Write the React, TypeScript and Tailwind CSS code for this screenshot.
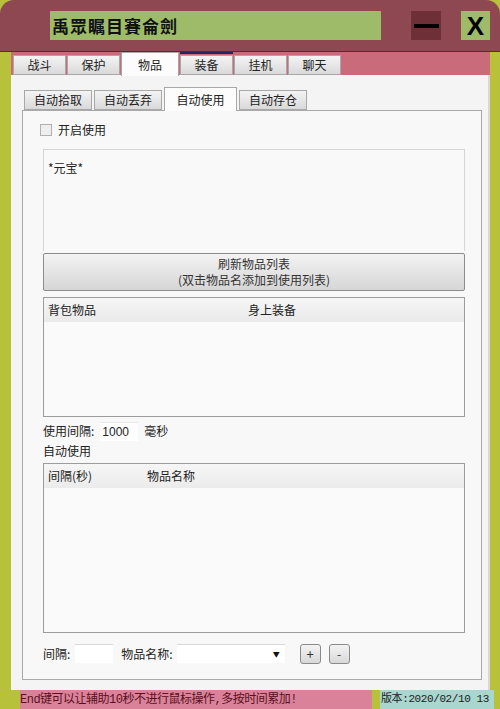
import React from 'react';

const cjk = { fontFamily: '"Noto Sans CJK SC", "Noto Sans", sans-serif' };
const mono = { fontFamily: '"Liberation Mono", "Noto Sans CJK SC", monospace' };

const outerTabs = ['战斗', '保护', '物品', '装备', '挂机', '聊天'];
const innerTabs = ['自动拾取', '自动丢弃', '自动使用', '自动存仓'];

const Tab: React.FC<{ label: string; active?: boolean; width: string }> = ({ label, active, width }) => (
  <div
    className={
      active
        ? `${width} h-[24px] -mb-px z-10 flex items-center justify-center border border-b-0 border-[#a8a8a8] bg-[#fcfcfc] text-[12px] text-[#222]`
        : `${width} h-[20px] flex items-center justify-center border border-[#a8a8a8] bg-gradient-to-b from-[#f4f4f4] to-[#d9d9d9] text-[12px] text-[#222]`
    }
  >
    {label}
  </div>
);

export default function App() {
  return (
    <div className="w-[500px] h-[709px] overflow-hidden bg-[#b7c23a] flex flex-col select-none" style={cjk}>
      {/* title bar */}
      <div className="h-[52px] shrink-0 bg-[#8e4852] rounded-t-[14px] border-b border-[#5c2a31] flex items-center">
        <div className="ml-[50px] w-[331px] h-[29px] bg-[#9dbb68] flex items-center pl-[2px]">
          <span className="text-[17px] font-bold text-[#111] tracking-[1px]">禹眾瞩目賽侖劍</span>
        </div>
        <div className="ml-[30px] w-[30px] h-[29px] bg-[#6e2f36] flex items-center justify-center">
          <div className="w-[25px] h-[4px] bg-black" />
        </div>
        <div className="ml-[20px] w-[29px] h-[29px] bg-[#9dbb68] flex items-center justify-center">
          <span className="text-[26px] font-bold leading-none text-black" style={{ fontFamily: '"Liberation Sans", sans-serif' }}>
            X
          </span>
        </div>
      </div>

      {/* body */}
      <div className="flex-1 flex min-h-0">
        <div className="w-[11px] shrink-0" />
        <div className="w-[479px] flex flex-col">
          {/* outer tabs */}
          <div className="h-[23px] shrink-0 bg-[#c96b7a] flex items-end pl-[2px] gap-[1px]">
            {outerTabs.map((t, i) =>
              i === 3 ? (
                <div key={t} className="h-[23px] flex flex-col justify-between">
                  <div className="h-[2px] bg-[#1b2a66]" />
                  <Tab label={t} width="w-[53px]" />
                </div>
              ) : (
                <Tab key={t} label={t} active={i === 2} width={i === 2 ? 'w-[58px]' : 'w-[53px]'} />
              )
            )}
          </div>
          {/* content panel */}
          <div className="flex-1 bg-[#f4f4f4] border-r-2 border-[#d8d8d8] flex flex-col pl-[11px] pr-[6px] pt-[11px]">
            <div className="h-[24px] flex items-end pl-[2px] gap-[2px]">
              {innerTabs.map((t, i) => (
                <Tab key={t} label={t} active={i === 2} width={i === 2 ? 'w-[73px]' : 'w-[68px]'} />
              ))}
            </div>
            <div className="h-[570px] border border-[#a9a9a9] bg-[#f8f8f8] flex flex-col px-[20px] pr-[16px]">
              {/* enable */}
              <div className="mt-[12px] h-[14px] flex items-center">
                <div className="ml-[-3px] w-[12px] h-[12px] border border-[#b0b0b0] bg-[#eeeeee]" />
                <span className="ml-[6px] text-[12px] text-[#222]">开启使用</span>
              </div>
              {/* text area */}
              <div className="mt-[12px] h-[102px] border-t border-x border-[#d6d6d6] bg-[#f9f9f9] pl-[4px] pt-[4px]">
                <span className="text-[12px] text-[#222]">*元宝*</span>
              </div>
              {/* refresh button */}
              <div className="mt-[2px] h-[38px] border border-[#8c8c8c] rounded-[2px] bg-gradient-to-b from-[#f3f3f3] to-[#d6d6d6] flex flex-col items-center justify-center text-[12px] leading-[16px] text-[#333]">
                <span>刷新物品列表</span>
                <span>(双击物品名添加到使用列表)</span>
              </div>
              {/* list 1 */}
              <div className="mt-[6px] h-[120px] border border-[#9c9c9c] bg-[#fafafa] flex flex-col">
                <div className="h-[24px] bg-gradient-to-b from-[#f6f6f6] to-[#eaeaea] flex items-center text-[12px] text-[#222]">
                  <span className="ml-[4px] w-[200px]">背包物品</span>
                  <span>身上装备</span>
                </div>
              </div>
              {/* interval */}
              <div className="mt-[6px] h-[16px] flex items-center text-[12px] text-[#222]">
                <span>使用间隔:</span>
                <span className="ml-[6px] w-[38px] pl-[2px] border-t border-[#e8e8e8] bg-white" style={{ fontFamily: '"Liberation Sans", sans-serif' }}>
                  1000
                </span>
                <span className="ml-[6px]">毫秒</span>
              </div>
              <div className="mt-[4px] h-[16px] flex items-center text-[12px] text-[#222]">自动使用</div>
              {/* list 2 */}
              <div className="mt-[4px] h-[170px] border border-[#9c9c9c] bg-[#fafafa] flex flex-col">
                <div className="h-[24px] bg-gradient-to-b from-[#f6f6f6] to-[#ebebeb] flex items-center text-[12px] text-[#222]">
                  <span className="ml-[4px] w-[99px]">间隔(秒)</span>
                  <span>物品名称</span>
                </div>
              </div>
              {/* bottom controls */}
              <div className="mt-[10px] h-[21px] flex items-center text-[12px] text-[#222]">
                <span>间隔:</span>
                <div className="ml-[5px] w-[38px] h-[19px] border-t border-[#d8d8d8] bg-white" />
                <span className="ml-[8px]">物品名称:</span>
                <div className="ml-[4px] w-[108px] h-[19px] border-t border-[#d8d8d8] bg-white flex items-center justify-end pr-[5px]">
                  <span className="text-[7px] text-[#111]">▼</span>
                </div>
                <div className="ml-[15px] w-[21px] h-[20px] border border-[#8a8a8a] rounded-[3px] bg-gradient-to-b from-[#f4f4f4] to-[#d8d8d8] flex items-center justify-center text-[13px] leading-none text-[#333]">
                  +
                </div>
                <div className="ml-[8px] w-[21px] h-[20px] border border-[#8a8a8a] rounded-[3px] bg-gradient-to-b from-[#f4f4f4] to-[#d8d8d8] flex items-center justify-center text-[12px] leading-none text-[#333]">
                  -
                </div>
              </div>
            </div>
            <div className="h-[10px]" />
          </div>
        </div>
        <div className="w-[10px] shrink-0" />
      </div>

      {/* status bar */}
      <div className="h-[19px] shrink-0 flex items-center">
        <div className="w-[20px] h-full" />
        <div className="w-[352px] h-full bg-[#d9829a] flex items-center text-[12px] text-[#5a1020]" style={mono}>
          <span className="tracking-[-0.5px]">End键可以让辅助10秒不进行鼠标操作,多按时间累加!</span>
        </div>
        <div className="w-[8px] h-full" />
        <div className="w-[114px] h-full bg-[#a9d6cf] flex items-center pl-[1px] text-[11px] tracking-[-0.4px] text-[#1a1a1a] whitespace-nowrap" style={mono}>
          版本:2020/02/10 13
        </div>
      </div>
    </div>
  );
}
